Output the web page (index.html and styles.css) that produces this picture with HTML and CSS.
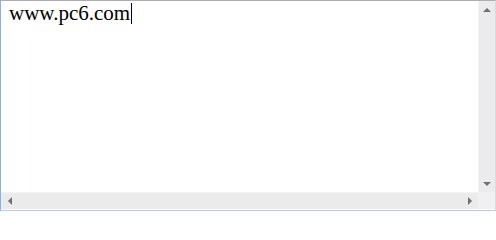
FILE: index.html
```html
<!DOCTYPE html>
<html>
<head>
<meta charset="utf-8">
<link rel="stylesheet" href="styles.css">
</head>
<body>
<div class="box">
  <div class="content"><span class="text">www.pc6.com</span><span class="caret"></span></div>
  <div class="vbar">
    <div class="btn"><span class="tri up"></span></div>
    <div class="track"></div>
    <div class="btn"><span class="tri down"></span></div>
  </div>
  <div class="hbar">
    <div class="btn"><span class="tri left"></span></div>
    <div class="track"></div>
    <div class="btn"><span class="tri right"></span></div>
  </div>
  <div class="corner"></div>
</div>
</body>
</html>
```
FILE: styles.css
```css
html, body { margin: 0; padding: 0; background: #fff; }
.box {
  width: 496px;
  height: 211px;
  box-sizing: border-box;
  border-style: solid;
  border-width: 1px;
  border-top-color: #abadb3;
  border-left-color: #8ab4de;
  border-right-color: #d6dde6;
  border-bottom-color: #b3cde6;
  display: grid;
  grid-template-columns: 477px 17px;
  grid-template-rows: 191px 17px;
  background: #fff;
}
.content {
  padding: 1px 0 0 8px;
  font-family: "Liberation Serif", "Times New Roman", serif;
  font-size: 21px;
  line-height: 23px;
  color: #000;
  display: flex;
  align-items: flex-start;
}
.caret {
  display: inline-block;
  width: 1px;
  height: 21px;
  margin-top: 1px;
  background: #000;
  margin-left: 1px;
}
.vbar {
  background: #ebebeb;
  border-left: 1px solid #f3f3f3;
  display: flex;
  flex-direction: column;
}
.hbar {
  background: #ebebeb;
  border-top: 1px solid #f3f3f3;
  display: flex;
  flex-direction: row;
}
.vbar .btn { height: 17px; }
.hbar .btn { width: 17px; }
.track { flex: 1; }
.btn {
  display: flex;
  align-items: center;
  justify-content: center;
}
.corner { background: #f0f0f0; }
.tri { width: 0; height: 0; border-style: solid; }
.tri.up { border-width: 0 4px 4px 4px; border-color: transparent transparent #707070 transparent; }
.tri.down { border-width: 4px 4px 0 4px; border-color: #707070 transparent transparent transparent; }
.tri.left { border-width: 4px 4px 4px 0; border-color: transparent #707070 transparent transparent; }
.tri.right { border-width: 4px 0 4px 4px; border-color: transparent transparent transparent #707070; }
```
